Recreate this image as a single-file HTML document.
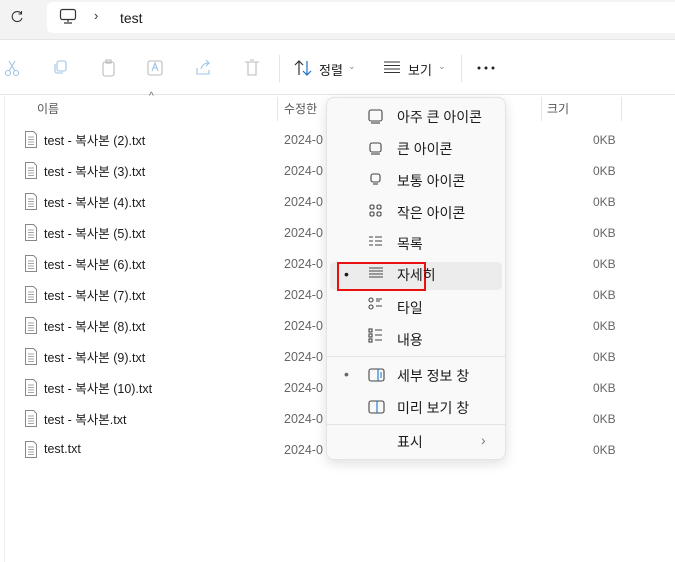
<!DOCTYPE html><html><head><meta charset="utf-8"><style>
*{margin:0;padding:0;box-sizing:border-box}
body{width:675px;height:562px;overflow:hidden;background:#fff;font-family:"Liberation Sans","Noto Sans CJK KR",sans-serif;font-size:13px;color:#1b1b1b;position:relative}
.a{position:absolute}
.top{left:0;top:0;width:675px;height:40px;background:#f3f3f3;border-bottom:1px solid #e5e5e5}
.addr{left:47px;top:2px;width:640px;height:31px;background:#fff;border-radius:5px}
.tb{left:0;top:41px;width:675px;height:54px;border-bottom:1px solid #e5e5e5;background:#fff}
.row{left:24px;height:20px;font-size:12.5px;display:flex;align-items:center}
.d{left:284px;color:#666;font-size:12.5px}
.s{left:593px;color:#666;font-size:12px}
.menu{left:326px;top:97px;width:180px;height:363px;background:#f9f9f9;border:1px solid #e3e3e3;border-radius:8px;box-shadow:0 4px 12px rgba(0,0,0,.12)}
.mi{left:70px;font-size:14px;color:#1b1b1b}
</style></head><body>
<div class="a top"></div>
<div class="a addr"></div>
<svg class="a" style="left:9px;top:9px" width="16" height="16" viewBox="0 0 16 16" fill="none" stroke="#333" stroke-width="1.1"><path d="M12.5 5A5 5 0 1 0 13 9"/><path d="M12.5 2v3h-3"/></svg>
<svg class="a" style="left:59px;top:8px" width="18" height="17" viewBox="0 0 18 17" fill="none" stroke="#333" stroke-width="1.2"><rect x="1.5" y="1.5" width="15" height="10" rx="2"/><path d="M9 12v2M5 15h8"/></svg>
<div class="a" style="left:94px;top:8px;color:#333;font-size:13px">›</div>
<div class="a" style="left:120px;top:10px;font-size:14px">test</div>
<div class="a tb"></div>
<svg class="a" style="left:0;top:56px" width="280" height="24" viewBox="0 0 280 24" fill="none" stroke="#9ec3e6" stroke-width="1.1">
<circle cx="8" cy="17" r="2.5"/><circle cx="16" cy="17" r="2.5"/><path d="M9 15l6-10M15 15L9 5"/>
<rect x="57" y="5" width="9" height="10" rx="2"/><path d="M55 8v7a2 2 0 0 0 2 2h6"/>
<rect x="103" y="6" width="11" height="14" rx="2" stroke="#bbb"/><rect x="106" y="4" width="5" height="3" stroke="#bbb"/>
<rect x="148" y="5" width="14" height="14" rx="2" stroke="#bbb"/><path d="M152 15l3-8 3 8M153 12h4"/>
<path d="M197 12v6h12v-4"/><path d="M201 13c1-4 4-6 8-6M206 4l3 3-3 3"/>
<path d="M245 6h14M248 6v13h8V6M250 4h4" stroke="#bbb"/>
</svg>
<div class="a" style="left:279px;top:55px;width:1px;height:27px;background:#e3e3e3"></div>
<div class="a" style="left:461px;top:55px;width:1px;height:27px;background:#e3e3e3"></div>
<svg class="a" style="left:294px;top:59px" width="18" height="18" viewBox="0 0 18 18" fill="none" stroke-width="1.2"><path d="M5 16V2M1 6l4-4 4 4" stroke="#333"/><path d="M13 2v14M9 12l4 4 4-4" stroke="#1a73c8"/></svg>
<div class="a" style="left:319px;top:60px;font-size:13px">정렬</div><div class="a" style="left:348px;top:61px;font-size:9px;color:#888">⌄</div>
<svg class="a" style="left:383px;top:60px" width="18" height="14" viewBox="0 0 18 14" stroke="#333" stroke-width="1.1"><path d="M1 2h16M1 5.5h16M1 9h16M1 12.5h16"/></svg>
<div class="a" style="left:408px;top:60px;font-size:13px">보기</div><div class="a" style="left:438px;top:61px;font-size:9px;color:#888">⌄</div>
<svg class="a" style="left:477px;top:66px" width="18" height="4" viewBox="0 0 18 4" fill="#222"><circle cx="2" cy="2" r="1.5"/><circle cx="9" cy="2" r="1.5"/><circle cx="16" cy="2" r="1.5"/></svg>
<div class="a" style="left:4px;top:96px;width:1px;height:466px;background:#eee"></div>
<div class="a" style="left:37px;top:100px;font-size:12px;color:#555">이름</div>
<div class="a" style="left:149px;top:91px;font-size:10px;color:#666">^</div>
<div class="a" style="left:277px;top:97px;width:1px;height:24px;background:#e5e5e5"></div>
<div class="a" style="left:284px;top:100px;font-size:12px;color:#555">수정한</div>
<div class="a" style="left:541px;top:97px;width:1px;height:24px;background:#e5e5e5"></div>
<div class="a" style="left:547px;top:100px;font-size:12px;color:#555">크기</div>
<div class="a" style="left:621px;top:97px;width:1px;height:24px;background:#e5e5e5"></div>
<div id="rows"></div>
<script>
var n=["test - 복사본 (2).txt","test - 복사본 (3).txt","test - 복사본 (4).txt","test - 복사본 (5).txt","test - 복사본 (6).txt","test - 복사본 (7).txt","test - 복사본 (8).txt","test - 복사본 (9).txt","test - 복사본 (10).txt","test - 복사본.txt","test.txt"],h="";
n.forEach(function(t,i){var y=129+i*31;h+='<div class="a row" style="top:'+y+'px"><svg width="14" height="17" viewBox="0 0 14 17" fill="#fff" stroke="#888" stroke-width="1"><path d="M1.5 .5h8l3 3v13h-11z"/><path d="M4 6h6M4 8.5h6M4 11h6M4 13.5h6" stroke-width=".8"/></svg><span style="margin-left:6px">'+t+'</span></div><div class="a d" style="top:'+(y+4)+'px">2024-0</div><div class="a s" style="top:'+(y+4)+'px">0KB</div>';});
document.getElementById("rows").innerHTML=h;
</script>
<div class="a menu">
<div class="a" style="left:3px;top:164px;width:172px;height:28px;background:#ececec;border-radius:4px"></div>
<div class="a" style="left:10px;top:164px;width:89px;height:29px;border:2px solid #e81010"></div>
<div class="a" style="left:17px;top:168px;font-size:14px">•</div>
<div class="a" style="left:17px;top:268px;font-size:14px;color:#666">•</div>
<div class="a" style="left:0;top:258px;width:178px;height:1px;background:#e3e3e3"></div>
<div class="a" style="left:0;top:326px;width:178px;height:1px;background:#e3e3e3"></div>
<svg class="a" style="left:40px;top:8px" width="20" height="340" viewBox="0 0 20 340" fill="none" stroke="#444" stroke-width="1.1">
<rect x="2" y="4" width="13" height="11" rx="2"/><path d="M4 17h9"/>
<rect x="3" y="37" width="11" height="9" rx="2"/><path d="M4 48h9"/>
<rect x="4" y="68" width="9" height="8" rx="2"/><path d="M6 78h5"/>
<rect x="3" y="99" width="4" height="4" rx="1.5"/><rect x="10" y="99" width="4" height="4" rx="1.5"/><rect x="3" y="106" width="4" height="4" rx="1.5"/><rect x="10" y="106" width="4" height="4" rx="1.5"/>
<path d="M2 131h4M2 135h4M2 139h4M8 131h7M8 135h7M8 139h7"/>
<path d="M2 162h14M2 165h14M2 168h14M2 171h14"/>
<rect x="2" y="192" width="4" height="4" rx="2"/><rect x="2" y="199" width="4" height="4" rx="2"/><path d="M9 193h6M9 195h4M9 200h6"/>
<rect x="2" y="223" width="3" height="3"/><rect x="2" y="228" width="3" height="3"/><rect x="2" y="233" width="3" height="3"/><path d="M8 224h7M8 229h7M8 234h7"/>
<rect x="2" y="263" width="15" height="12" rx="2"/><path d="M11 263v12" stroke="#1a73c8"/><path d="M13 267h2M13 269h2M13 271h2" stroke="#1a73c8"/>
<rect x="2" y="295" width="15" height="12" rx="2"/><path d="M10 295v12" stroke="#1a73c8"/>
</svg>
<div class="a mi" style="top:9px">아주 큰 아이콘</div>
<div class="a mi" style="top:41px">큰 아이콘</div>
<div class="a mi" style="top:73px">보통 아이콘</div>
<div class="a mi" style="top:105px">작은 아이콘</div>
<div class="a mi" style="top:136px">목록</div>
<div class="a mi" style="top:167px">자세히</div>
<div class="a mi" style="top:200px">타일</div>
<div class="a mi" style="top:232px">내용</div>
<div class="a mi" style="top:268px">세부 정보 창</div>
<div class="a mi" style="top:300px">미리 보기 창</div>
<div class="a mi" style="top:334px">표시</div>
<div class="a" style="left:154px;top:334px;font-size:14px;color:#777">›</div>
</div>
</body></html>
